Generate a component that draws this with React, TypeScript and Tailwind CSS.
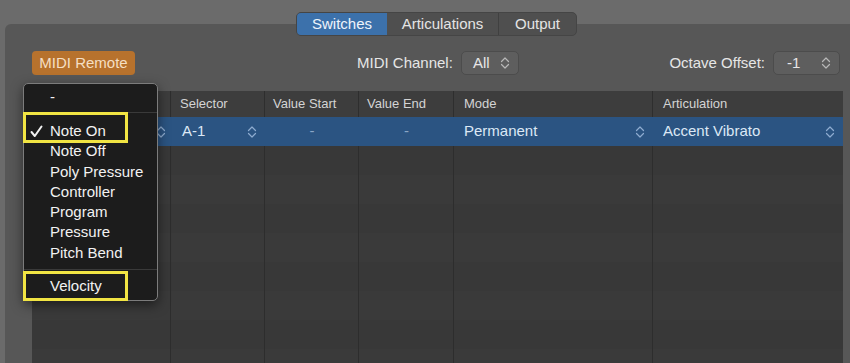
import React from 'react';

const font = "font-['Liberation_Sans',Arial,sans-serif]";

function Chevrons({ className }: { className?: string }) {
  return (
    <svg width="10" height="16" viewBox="0 0 10 16" fill="none" className={className}>
      <path
        d="M1.5 6.5 5 3l3.5 3.5M1.5 9.5 5 13l3.5-3.5"
        stroke="currentColor"
        strokeWidth="1.2"
        strokeLinecap="round"
        strokeLinejoin="round"
      />
    </svg>
  );
}

const columns = [
  { name: '', w: 'w-[139px]', pl: 'pl-[8px]' },
  { name: 'Selector', w: 'w-[94px]', pl: 'pl-[9px]' },
  { name: 'Value Start', w: 'w-[94px]', pl: 'pl-[8px]' },
  { name: 'Value End', w: 'w-[95px]', pl: 'pl-[8px]' },
  { name: 'Mode', w: 'w-[199px]', pl: 'pl-[10px]' },
  { name: 'Articulation', w: 'w-[190px]', pl: 'pl-[10px]' },
];

const menuItems = ['Note On', 'Note Off', 'Poly Pressure', 'Controller', 'Program', 'Pressure', 'Pitch Bend'];

export default function App() {
  return (
    <div className={`relative w-[850px] h-[363px] overflow-hidden bg-[#6b6b6b] ${font}`}>
      {/* tabs */}
      <div className="relative z-10 flex pl-[296px] pt-[12px]">
        <div className="flex h-[24px] rounded-[5px] border border-[#454545] bg-[#4f4f4f] text-[15px] text-[#e4e4e4] overflow-hidden">
          <div className="flex w-[90px] items-center justify-center bg-[#3c71ab] text-[#eef4fb]">Switches</div>
          <div className="flex w-[112px] items-center justify-center border-r border-[#404040]">Articulations</div>
          <div className="flex w-[77px] items-center justify-center">Output</div>
        </div>
      </div>

      {/* panel */}
      <div className="ml-[5px] -mt-[12px] h-[339px] rounded-tl-[6px] bg-[#575757] pt-[27px] pl-[27px] pr-[7px]">
        <div className="flex h-[24px] items-center text-[15px] text-[#e6e6e6]">
          <div className="flex h-[24px] w-[103px] items-center justify-center rounded-[4px] bg-[#b7722d] text-[#f5dfc3]">
            MIDI Remote
          </div>
          <div className="ml-[222px] flex items-center gap-[8px]">
            <span>MIDI Channel:</span>
            <div className="flex h-[24px] w-[58px] items-center justify-between rounded-[5px] border border-[#4c4c4c] bg-[#5e5e5e] pl-[11px] pr-[8px]">
              <span>All</span>
              <Chevrons className="text-[#b8b8b8]" />
            </div>
          </div>
          <div className="ml-auto mr-[3px] flex items-center gap-[8px]">
            <span>Octave Offset:</span>
            <div className="flex h-[24px] w-[67px] items-center justify-between rounded-[5px] border border-[#4c4c4c] bg-[#5e5e5e] pl-[13px] pr-[8px]">
              <span>-1</span>
              <Chevrons className="text-[#b8b8b8]" />
            </div>
          </div>
        </div>

        {/* table */}
        <div className="mt-[16px] flex flex-col">
          <div className="flex h-[26px] bg-[#3d3d3d] text-[13px] text-[#d4d4d4]">
            {columns.map((c, i) => (
              <div
                key={i}
                className={`${c.w} ${c.pl} flex items-center ${i < columns.length - 1 ? 'border-r border-[#2e2e2e]' : ''}`}
              >
                {c.name}
              </div>
            ))}
          </div>

          <div className="flex h-[29px] bg-[#2b5482] text-[15px] text-[#dce8f5]">
            <div className="flex w-[139px] items-center justify-end pr-[5px]">
              <Chevrons className="text-[#8eacd0]" />
            </div>
            <div className="flex w-[94px] items-center justify-between pl-[11px] pr-[8px]">
              <span>A-1</span>
              <Chevrons className="text-[#8eacd0]" />
            </div>
            <div className="flex w-[94px] items-center justify-center text-[#8aa6c6]">-</div>
            <div className="flex w-[95px] items-center justify-center text-[#8aa6c6]">-</div>
            <div className="flex w-[199px] items-center justify-between pl-[10px] pr-[8px]">
              <span>Permanent</span>
              <Chevrons className="text-[#8eacd0]" />
            </div>
            <div className="flex w-[190px] items-center justify-between pl-[10px] pr-[8px]">
              <span>Accent Vibrato</span>
              <Chevrons className="text-[#8eacd0]" />
            </div>
          </div>

          {Array.from({ length: 8 }).map((_, r) => (
            <div key={r} className={`flex h-[29px] ${r % 2 === 0 ? 'bg-[#383838]' : 'bg-[#3a3a3a]'}`}>
              {columns.map((c, i) => (
                <div
                  key={i}
                  className={`${c.w} ${i < columns.length - 1 ? 'border-r border-[#2d2d2d]' : ''}`}
                />
              ))}
            </div>
          ))}
        </div>
      </div>

      {/* popup menu */}
      <div className="absolute left-[23px] top-[83px] z-20 flex h-[218px] w-[135px] flex-col rounded-[5px] border border-[#7c7c7c] bg-[#1c1c1c] pt-[3px] text-[15px] text-[#f2f2f2] shadow-[0_4px_12px_rgba(0,0,0,0.5)]">
        <div className="flex h-[20px] items-center pl-[26px]">-</div>
        <div className="mt-[5px] mb-[8px] h-px bg-[#3a3a3a]" />
        {menuItems.map((item, i) => (
          <div key={item} className="relative flex h-[20.3px] items-center pl-[26px]">
            {i === 0 && (
              <svg width="13" height="13" viewBox="0 0 13 13" className="absolute left-[6px] top-[4px]">
                <path d="M1.5 7 4.8 11 11.5 1.5" fill="none" stroke="#f2f2f2" strokeWidth="2" strokeLinecap="round" strokeLinejoin="round" />
              </svg>
            )}
            {item}
          </div>
        ))}
        <div className="mt-[6px] mb-[6px] h-px bg-[#3a3a3a]" />
        <div className="flex h-[20px] items-center pl-[26px]">Velocity</div>
      </div>

      {/* highlight annotations */}
      <div className="absolute left-[23px] top-[112px] z-30 h-[31px] w-[105px] border-[3px] border-[#f1e443]" />
      <div className="absolute left-[23px] top-[271px] z-30 h-[30px] w-[105px] border-[3px] border-[#f1e443]" />
    </div>
  );
}
